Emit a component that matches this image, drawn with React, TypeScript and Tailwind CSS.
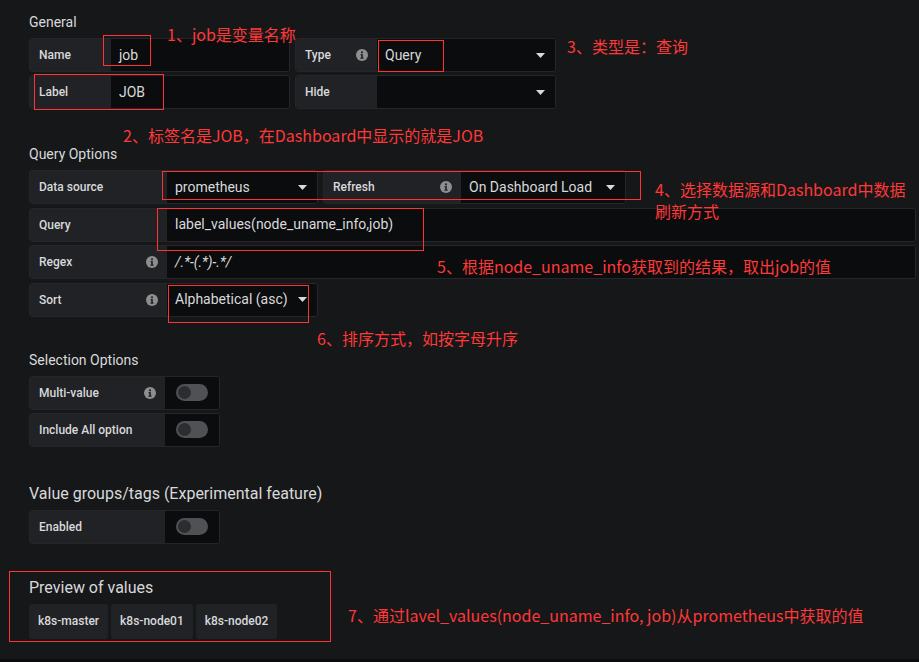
import React from 'react';

// Grafana variable editor (Query variable) with red annotation overlays.

function InfoIcon() {
  return (
    <svg width="12" height="12" viewBox="0 0 12 12" className="shrink-0">
      <circle cx="6" cy="6" r="6" fill="#8e8e8e" />
      <circle cx="6" cy="3.3" r="1.1" fill="#202226" />
      <path d="M4.6 5h2.2v3.6h0.8v1.2H4.4V8.6h0.8V6.2h-0.6z" fill="#202226" />
    </svg>
  );
}

function Caret() {
  return (
    <svg width="9" height="5" viewBox="0 0 9 5" className="shrink-0">
      <path d="M0 0h9L4.5 5z" fill="#d8d9da" />
    </svg>
  );
}

function Toggle() {
  return (
    <div className="flex items-center justify-center w-[54px] h-full bg-[#0b0c0e]">
      <div className="relative w-[32px] h-[17px] rounded-full bg-[#505154]">
        <div className="absolute left-[2px] top-[2px] w-[13px] h-[13px] rounded-full bg-[#2c2d30]" />
      </div>
    </div>
  );
}

function Heading({ children, big }: { children: React.ReactNode; big?: boolean }) {
  return (
    <div
      className={
        big
          ? 'text-[16px] leading-[18px] text-[#d8d9da] mb-[7px]'
          : 'text-[14px] leading-[16px] text-[#d8d9da] mb-[8px]'
      }
    >
      {children}
    </div>
  );
}

function Note({ className, children }: { className: string; children: React.ReactNode }) {
  return (
    <div
      className={`absolute text-[16px] leading-[22px] text-[#ff3838] whitespace-nowrap ${className}`}
      style={{ fontFamily: '"Noto Sans CJK SC", "Noto Sans", sans-serif' }}
    >
      {children}
    </div>
  );
}

const labelCls =
  'flex items-center justify-between h-full bg-[#202226] px-[9px] text-[12px] font-medium text-[#d8d9da]';
const inputCls = 'flex items-center h-full bg-[#0b0c0e] px-[8px] text-[14px] text-[#d8d9da]';
const fieldCls = 'flex h-full rounded-[3px] border border-[#262628] overflow-hidden';

export default function App() {
  return (
    <div
      className="relative w-[919px] h-[662px] overflow-hidden bg-[#161719]"
      style={{ fontFamily: 'Roboto, "Noto Sans", sans-serif' }}
    >
      <div className="pl-[29px] pt-[14px]">
        {/* General */}
        <Heading>General</Heading>
        <div className="flex flex-col gap-[3px]">
          <div className="flex h-[34px] gap-[5px]">
            <div className={fieldCls}>
              <div className={`${labelCls} w-[81px]`}>Name</div>
              <div className={`${inputCls} w-[178px]`}>job</div>
            </div>
            <div className={fieldCls}>
              <div className={`${labelCls} w-[81px]`}>
                Type <InfoIcon />
              </div>
              <div className={`${inputCls} w-[178px] justify-between pr-[10px]`}>
                Query <Caret />
              </div>
            </div>
          </div>
          <div className="flex h-[34px] gap-[5px]">
            <div className={fieldCls}>
              <div className={`${labelCls} w-[81px]`}>Label</div>
              <div className={`${inputCls} w-[178px]`}>JOB</div>
            </div>
            <div className={fieldCls}>
              <div className={`${labelCls} w-[81px]`}>Hide</div>
              <div className={`${inputCls} w-[178px] justify-end pr-[10px]`}>
                <Caret />
              </div>
            </div>
          </div>
        </div>

        {/* Query Options */}
        <div className="mt-[37px]">
          <Heading>Query Options</Heading>
          <div className="flex flex-col gap-[3.5px]">
            <div className="flex h-[34px] gap-[5px]">
              <div className={fieldCls}>
                <div className={`${labelCls} w-[137px]`}>Data source</div>
                <div className={`${inputCls} w-[150px] justify-between pr-[10px]`}>
                  prometheus <Caret />
                </div>
              </div>
              <div className={fieldCls}>
                <div className={`${labelCls} w-[137px]`}>
                  Refresh <InfoIcon />
                </div>
                <div className={`${inputCls} w-[164px] justify-between pr-[10px]`}>
                  On Dashboard Load <Caret />
                </div>
              </div>
            </div>
            <div className="flex h-[34px] mr-[3px]">
              <div className={`${fieldCls} flex-1`}>
                <div className={`${labelCls} w-[137px]`}>Query</div>
                <div className={`${inputCls} flex-1`}>label_values(node_uname_info,job)</div>
              </div>
            </div>
            <div className="flex h-[34px] mr-[3px]">
              <div className={`${fieldCls} flex-1`}>
                <div className={`${labelCls} w-[137px]`}>
                  Regex <InfoIcon />
                </div>
                <div className={`${inputCls} flex-1 italic text-[#45484e]`}>/.*-(.*)-.*/</div>
              </div>
            </div>
            <div className="flex h-[34px]">
              <div className={fieldCls}>
                <div className={`${labelCls} w-[137px]`}>
                  Sort <InfoIcon />
                </div>
                <div className={`${inputCls} w-[150px] justify-between pr-[10px]`}>
                  Alphabetical (asc) <Caret />
                </div>
              </div>
            </div>
          </div>
        </div>

        {/* Selection Options */}
        <div className="mt-[35px]">
          <Heading>Selection Options</Heading>
          <div className="flex flex-col gap-[3px]">
            <div className="flex h-[34px]">
              <div className={fieldCls}>
                <div className={`${labelCls} w-[135px]`}>
                  Multi-value <InfoIcon />
                </div>
                <Toggle />
              </div>
            </div>
            <div className="flex h-[34px]">
              <div className={fieldCls}>
                <div className={`${labelCls} w-[135px]`}>Include All option</div>
                <Toggle />
              </div>
            </div>
          </div>
        </div>

        {/* Value groups/tags */}
        <div className="mt-[38px]">
          <Heading big>Value groups/tags (Experimental feature)</Heading>
          <div className="flex h-[34px]">
            <div className={fieldCls}>
              <div className={`${labelCls} w-[135px]`}>Enabled</div>
              <Toggle />
            </div>
          </div>
        </div>

        {/* Preview */}
        <div className="mt-[35px]">
          <Heading big>Preview of values</Heading>
          <div className="flex h-[35px] gap-[3px]">
            {['k8s-master', 'k8s-node01', 'k8s-node02'].map((v) => (
              <div
                key={v}
                className="flex items-center h-full rounded-[3px] bg-[#202226] px-[9px] text-[12px] font-medium text-[#d8d9da]"
              >
                {v}
              </div>
            ))}
          </div>
        </div>
      </div>

      {/* bottom strip */}
      <div className="absolute left-0 right-0 bottom-0 h-[3px] bg-[#0b0c0e]" />

      {/* red annotation boxes */}
      <div className="absolute left-[103px] top-[35px] w-[48px] h-[31px] border border-[#ff3333]" />
      <div className="absolute left-[34px] top-[74px] w-[130px] h-[36px] border border-[#ff3333]" />
      <div className="absolute left-[378px] top-[40px] w-[66px] h-[32px] border border-[#ff3333]" />
      <div className="absolute left-[162px] top-[171px] w-[479px] h-[29px] border border-[#ff3333]" />
      <div className="absolute left-[157px] top-[208px] w-[267px] h-[43px] border border-[#ff3333]" />
      <div className="absolute left-[168px] top-[285px] w-[141px] h-[38px] border border-[#ff3333]" />
      <div className="absolute left-[9px] top-[571px] w-[322px] h-[71px] border border-[#ff3333]" />

      {/* annotation texts */}
      <Note className="left-[167px] top-[23px]">1、job是变量名称</Note>
      <Note className="left-[123px] top-[124px]">2、标签名是JOB，在Dashboard中显示的就是JOB</Note>
      <Note className="left-[567px] top-[35px]">3、类型是：查询</Note>
      <Note className="left-[655px] top-[178px]">
        4、选择数据源和Dashboard中数据
        <br />
        刷新方式
      </Note>
      <Note className="left-[437px] top-[255px]">5、根据node_uname_info获取到的结果，取出job的值</Note>
      <Note className="left-[317px] top-[327px]">6、排序方式，如按字母升序</Note>
      <Note className="left-[348px] top-[604px]">7、通过lavel_values(node_uname_info, job)从prometheus中获取的值</Note>
    </div>
  );
}
